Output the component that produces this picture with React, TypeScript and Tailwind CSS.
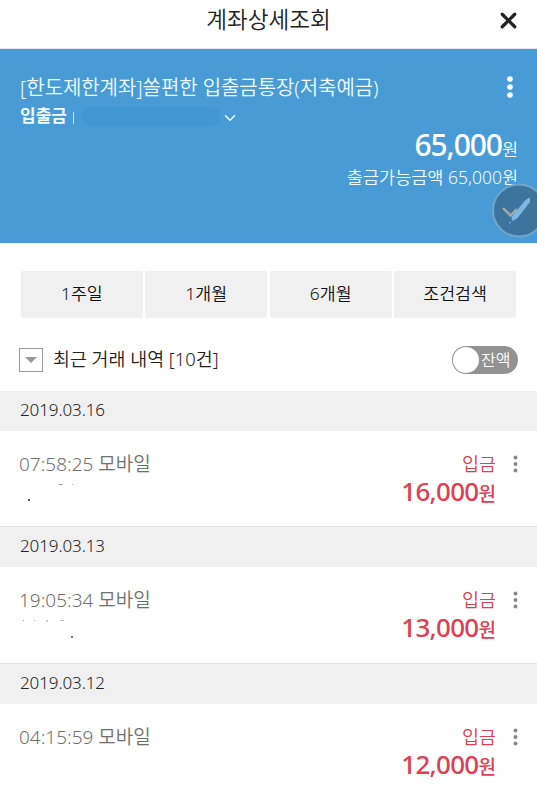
import { ChevronDown, X } from "lucide-react"

interface Transaction {
  date: string
  time: string
  channel: string
  type: string
  amount: string
  bar: string
  marks: { x: number; y: number; w: number; color: string }[]
}

const periods = ["1주일", "1개월", "6개월", "조건검색"]

const transactions: Transaction[] = [
  {
    date: "2019.03.16",
    time: "07:58:25",
    channel: "모바일",
    type: "입금",
    amount: "16,000",
    bar: "h-10",
    marks: [
      { x: 39, y: 0, w: 4, color: "#999" },
      { x: 52, y: 0, w: 1, color: "#bbb" },
      { x: 8, y: 15, w: 2, color: "#555" },
    ],
  },
  {
    date: "2019.03.13",
    time: "19:05:34",
    channel: "모바일",
    type: "입금",
    amount: "13,000",
    bar: "h-[41px] border-t border-[#e3e3e3]",
    marks: [
      { x: 3, y: 0, w: 1, color: "#aaa" },
      { x: 14, y: 0, w: 1, color: "#aaa" },
      { x: 26, y: 0, w: 2, color: "#ccc" },
      { x: 40, y: 0, w: 4, color: "#bbb" },
      { x: 51, y: 16, w: 2, color: "#777" },
    ],
  },
  {
    date: "2019.03.12",
    time: "04:15:59",
    channel: "모바일",
    type: "입금",
    amount: "12,000",
    bar: "h-[41px] border-t border-[#e3e3e3]",
    marks: [],
  },
]

function Dots({ className, r }: { className: string; r: number }) {
  return (
    <svg className={className} viewBox="0 0 6 22" fill="currentColor">
      <circle cx="3" cy="3" r={r} />
      <circle cx="3" cy="11" r={r} />
      <circle cx="3" cy="19" r={r} />
    </svg>
  )
}

function Header() {
  return (
    <header className="relative flex h-[49px] items-start justify-center border-b border-[#dfe7ec] pt-1">
      <h1 className="text-[22.6px] leading-8 font-[350] text-[#222]">계좌상세조회</h1>
      <button className="absolute top-[8px] right-[16px]" aria-label="닫기">
        <X className="size-[25px] text-[#222]" strokeWidth={3.1} />
      </button>
    </header>
  )
}

function AccountCard() {
  return (
    <section className="relative h-[194px] overflow-hidden bg-[#489bd5] px-5 pt-6 text-[#effbff]">
      <div className="flex h-7 items-center justify-between">
        <h2 className="pt-0.5 text-[20px] leading-7 font-[350] tracking-[-0.08px] whitespace-nowrap">
          [한도제한계좌]쏠편한 입출금통장(저축예금)
        </h2>
        <Dots className="mr-1 h-[22px] w-1.5 text-white" r={2.8} />
      </div>

      <div className="flex h-[30px] items-center">
        <strong className="text-[17px] leading-[30px] font-bold">입출금</strong>
        <span className="mt-1 ml-1.5 h-3 w-px bg-[#c4e4f4]" />
        <span className="ml-2 h-[19px] w-[138px] rounded-lg bg-[#4297d2]" />
        <ChevronDown className="mt-[3px] ml-px size-[18px]" strokeWidth={2} />
      </div>

      <p className="-mt-px flex h-[30px] items-baseline justify-end leading-[30px]">
        <span className="text-[30px] font-medium tracking-[-1.1px] text-white">65,000</span>
        <span className="-mr-px text-[17.5px] font-[350]">원</span>
      </p>
      <p className="mt-[3px] -mr-px text-right text-[17.5px] leading-7 font-[350]">출금가능금액 65,000원</p>

      {/* Botón flotante */}
      <svg className="absolute top-[134px] left-[492px] h-14 w-14" viewBox="0 0 56 56" fill="none">
        <circle cx="27" cy="27.5" r="26" fill="#3d749d" stroke="#71a6c9" strokeWidth="2" />
        <path d="M11 25l7.5 7.5 6.5-6.5" stroke="#a9a9a9" strokeWidth="2.4" />
        <path d="M37.5 15v4L25 35l-4.500 2.500-.5-3.500L33.500 17.500z" fill="#7bb9e2" stroke="#7bb9e2" strokeWidth="1" strokeLinejoin="round" />
        <circle cx="18" cy="39.5" r="1.1" fill="#64a9d8" />
      </svg>
    </section>
  )
}

function TransactionRow({ item }: { item: Transaction }) {
  return (
    <li>
      <div className={`${item.bar} flex items-center bg-[#f0f0f0] px-5 pb-0.5`}>
        <span className="text-[17px] leading-6 font-[350] tracking-[-0.1px] text-[#222]">{item.date}</span>
      </div>
      <div className="flex h-[95.4px] items-start pt-[18px] pr-[19px] pl-5">
        <div className="flex-1">
          <p className="-ml-px pt-px text-[19px] leading-7 font-[350] text-[#707070]">
            {item.time} {item.channel}
          </p>
          <svg className="mt-1.5 h-6 w-20">
            {item.marks.map((m, i) => (
              <rect key={i} x={m.x} y={m.y} width={m.w} height={m.w === 2 ? 2 : 1} fill={m.color} />
            ))}
          </svg>
        </div>
        <div className="text-right text-[#dc4052]">
          <p className="pt-px text-[18.5px] leading-7 font-[350]">{item.type}</p>
          <p className="-mt-px flex items-baseline justify-end leading-7">
            <span className="text-[26px] font-medium tracking-[-0.7px]">{item.amount}</span>
            <span className="text-[19px] font-medium">원</span>
          </p>
        </div>
        <Dots className="mt-[6px] ml-[17px] h-[18px] w-[5px] text-[#888]" r={2.4} />
      </div>
    </li>
  )
}

export default function App() {
  return (
    <main className="h-[798px] w-[537px] overflow-hidden bg-white font-['Noto_Sans','Noto_Sans_CJK_KR',sans-serif]">
      <Header />
      <AccountCard />

      <nav className="mt-7 grid h-[47px] grid-cols-4 gap-[2.6px] pr-[21px] pl-[21px]">
        {periods.map((label) => (
          <button key={label} className="rounded-xs bg-[#f0f0f0] pb-0.5 text-[17.3px] font-[350] text-[#111]">
            {label}
          </button>
        ))}
      </nav>

      <div className="flex h-[73px] items-center pt-2.5 pr-[19px] pl-[19px]">
        <span className="flex size-6 items-center justify-center border border-[#999]">
          <svg className="h-1.5 w-3" viewBox="0 0 12 6">
            <path d="M0 0h12L6 6z" fill="#999" />
          </svg>
        </span>
        <h3 className="ml-[10px] flex-1 pb-0.5 text-[18.4px] leading-6 font-[350] text-[#222]">최근 거래 내역 [10건]</h3>
        <span className="flex h-7 w-[66px] items-center rounded-full bg-[#929292] p-px">
          <span className="size-[26px] rounded-full bg-white" />
          <span className="ml-0.5 text-[16px] leading-6 font-[350] text-white">잔액</span>
        </span>
      </div>

      <ul>
        {transactions.map((item) => (
          <TransactionRow key={item.date} item={item} />
        ))}
      </ul>
    </main>
  )
}
